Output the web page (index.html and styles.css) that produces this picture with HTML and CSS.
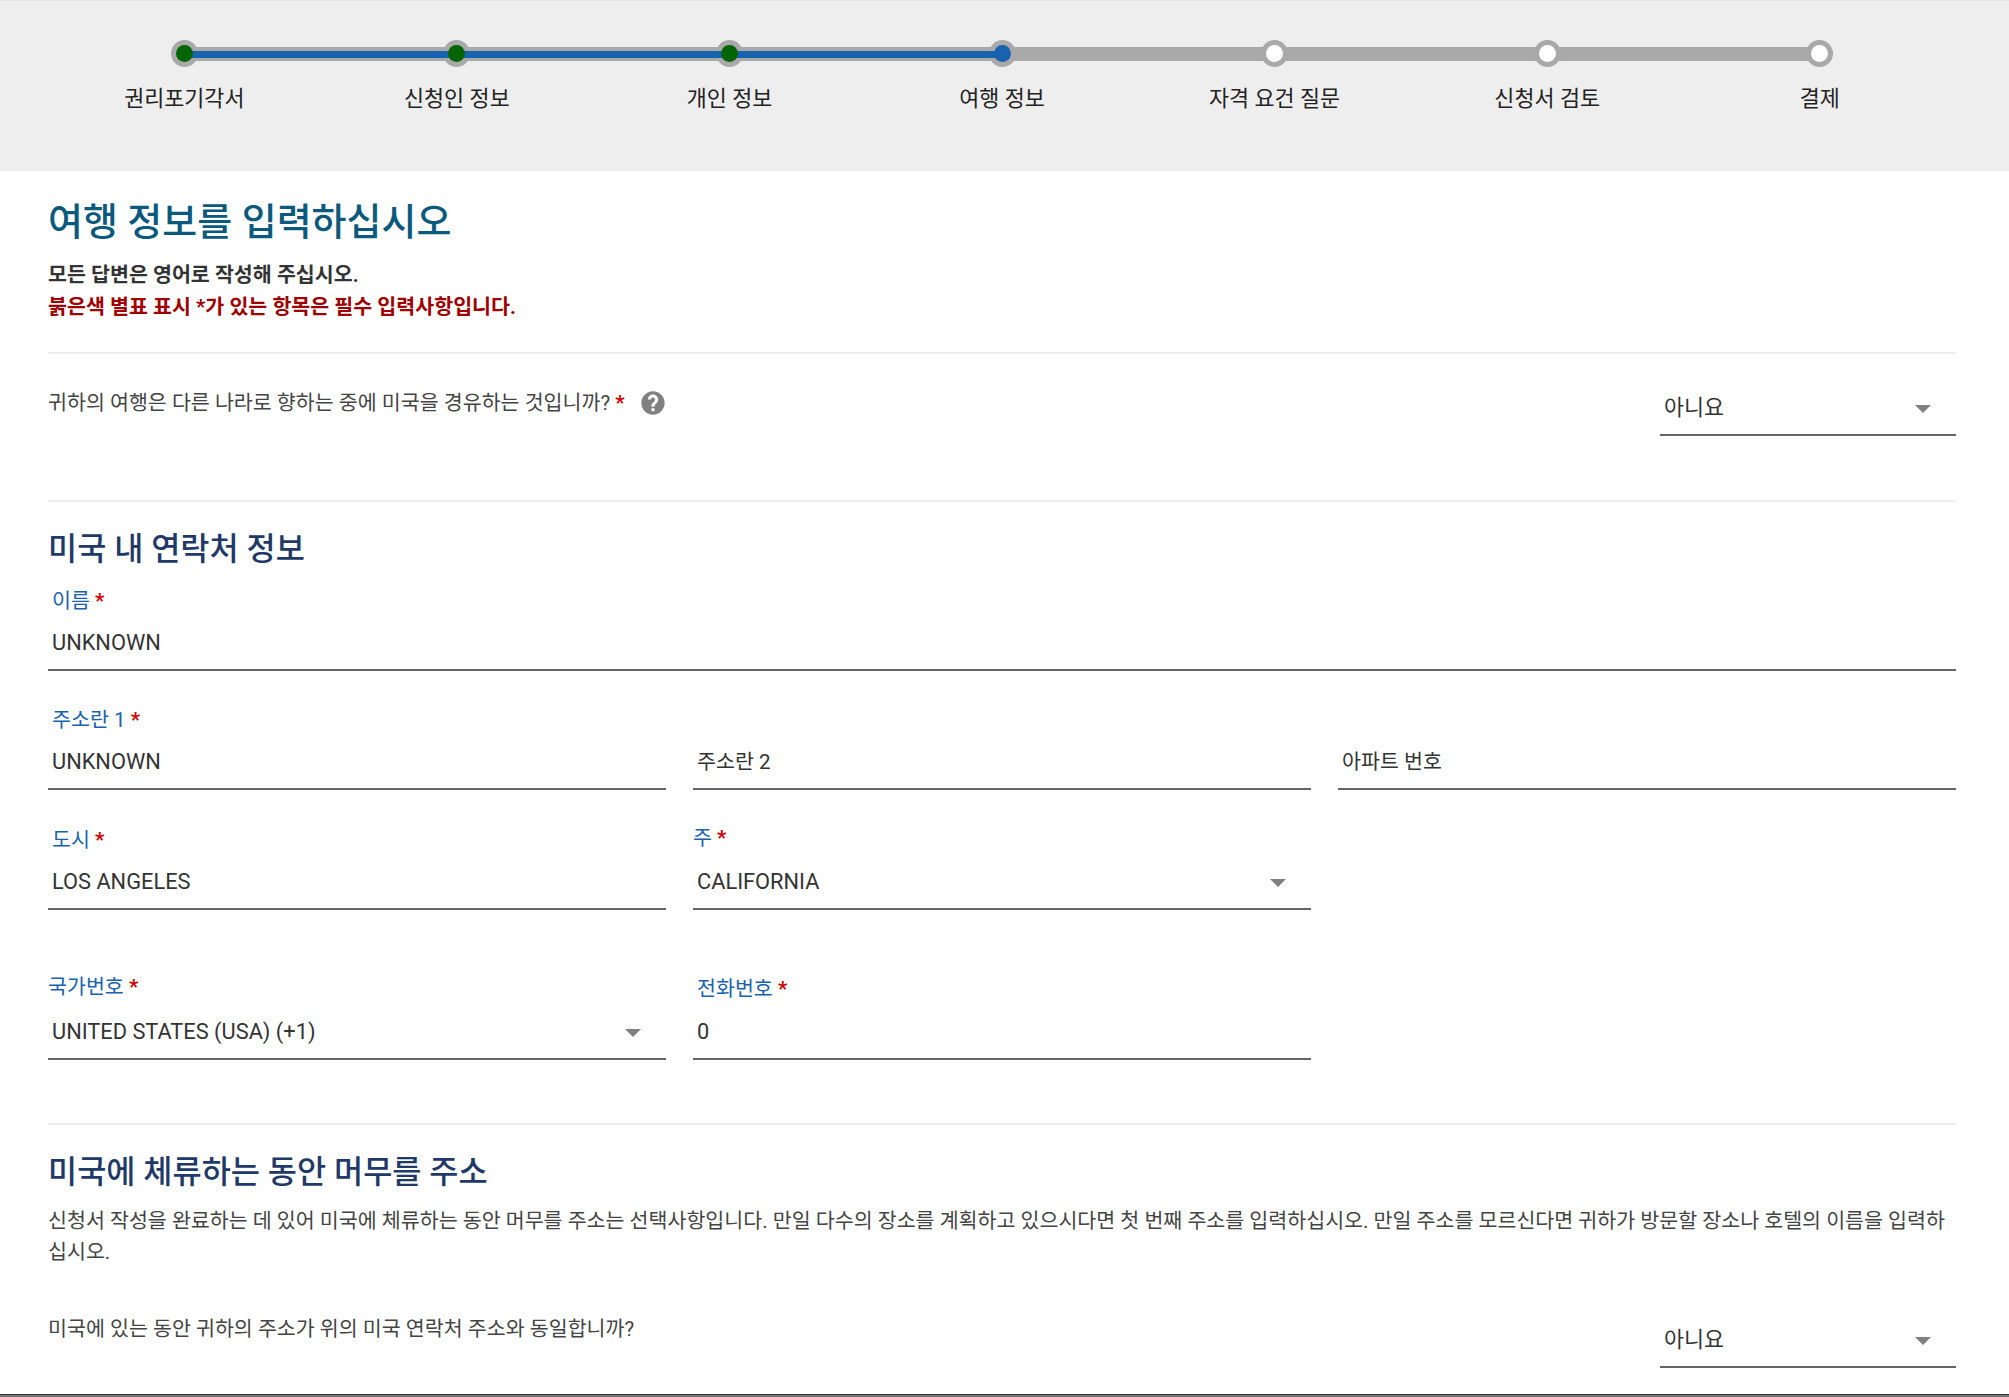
FILE: index.html
```html
<!DOCTYPE html>
<html lang="ko">
<head>
  <meta charset="UTF-8">
  <title>ESTA</title>
  <link rel="stylesheet" href="styles.css">
</head>
<body>
  <div class="stepper">
    <div class="step done"><div class="dot"></div><div class="step-label">권리포기각서</div></div>
    <div class="step done"><div class="dot"></div><div class="step-label">신청인 정보</div></div>
    <div class="step done"><div class="dot"></div><div class="step-label">개인 정보</div></div>
    <div class="step current"><div class="dot"></div><div class="step-label">여행 정보</div></div>
    <div class="step"><div class="dot"></div><div class="step-label">자격 요건 질문</div></div>
    <div class="step"><div class="dot"></div><div class="step-label">신청서 검토</div></div>
    <div class="step"><div class="dot"></div><div class="step-label">결제</div></div>
  </div>

  <div class="content">
    <h1>여행 정보를 입력하십시오</h1>
    <p class="note">모든 답변은 영어로 작성해 주십시오.</p>
    <p class="note red">붉은색 별표 표시 *가 있는 항목은 필수 입력사항입니다.</p>

    <div class="question q-transit">
      <div class="q-text">
        <span>귀하의 여행은 다른 나라로 향하는 중에 미국을 경유하는 것입니까? <span class="req">*</span></span>
        <svg class="help" viewBox="0 0 24 24"><path fill="#808080" d="M12 2C6.48 2 2 6.48 2 12s4.48 10 10 10 10-4.48 10-10S17.52 2 12 2zm1.300 17h-2.600v-2.500h2.600V19zm2.200-7.300l-1 1c-.8.8-1.200 1.300-1.200 2.500h-2.600v-.6c0-1.100.5-2.100 1.200-2.800l1.400-1.400c.3-.3.5-.8.5-1.300 0-1-.8-1.800-1.800-1.800s-1.800.8-1.800 1.800H7.600C7.600 6.600 9.600 4.700 12 4.700s4.400 1.900 4.400 4.300c0 1.100-.4 2-.9 2.700z"/></svg>
      </div>
      <div class="field select yes-no"><div class="value">아니요</div><div class="arrow"></div></div>
    </div>

    <h2 class="first">미국 내 연락처 정보</h2>

    <div class="field full">
      <div class="label">이름 <span class="req">*</span></div>
      <div class="value">UNKNOWN</div>
    </div>

    <div class="row">
      <div class="field">
        <div class="label">주소란 1 <span class="req">*</span></div>
        <div class="value">UNKNOWN</div>
      </div>
      <div class="field">
        <div class="value placeholder">주소란 2</div>
      </div>
      <div class="field">
        <div class="value placeholder">아파트 번호</div>
      </div>
    </div>

    <div class="row city">
      <div class="field">
        <div class="label">도시 <span class="req">*</span></div>
        <div class="value">LOS ANGELES</div>
      </div>
      <div class="field select">
        <div class="label flush">주 <span class="req">*</span></div>
        <div class="value">CALIFORNIA</div>
        <div class="arrow"></div>
      </div>
    </div>

    <div class="row phone">
      <div class="field select">
        <div class="label flush">국가번호 <span class="req">*</span></div>
        <div class="value">UNITED STATES (USA) (+1)</div>
        <div class="arrow"></div>
      </div>
      <div class="field">
        <div class="label">전화번호 <span class="req">*</span></div>
        <div class="value">0</div>
      </div>
    </div>

    <div class="section">
      <h2>미국에 체류하는 동안 머무를 주소</h2>
      <p class="body-text">신청서 작성을 완료하는 데 있어 미국에 체류하는 동안 머무를 주소는 선택사항입니다. 만일 다수의 장소를 계획하고 있으시다면 첫 번째 주소를 입력하십시오. 만일 주소를 모르신다면 귀하가 방문할 장소나 호텔의 이름을 입력하십시오.</p>

      <div class="question q-same">
        <div class="q-text">미국에 있는 동안 귀하의 주소가 위의 미국 연락처 주소와 동일합니까?</div>
        <div class="field select yes-no"><div class="value">아니요</div><div class="arrow"></div></div>
      </div>
    </div>
  </div>

  <div class="bottom-bar"></div>
</body>
</html>
```

FILE: styles.css
```css
* {
  box-sizing: border-box;
}

html, body {
  height: 1397px;
  overflow: hidden;
}

body {
  margin: 0;
  background: #fff;
  color: #333;
  font-family: Roboto, "Noto Sans CJK KR", sans-serif;
  font-size: 20.6px;
  position: relative;
}

/* progress steps */
.stepper {
  display: flex;
  height: 171px;
  padding: 39px 53px 0 48px;
  background: #eee;
  border-top: 1px solid #e6e6e6;
}

.step {
  flex: 1;
  position: relative;
  text-align: center;
}

.step::before,
.step.done::after {
  content: "";
  position: absolute;
  z-index: 1;
  top: 7px;
  left: 50%;
  width: 100%;
  height: 14px;
  background: #a9a9a9;
}

.step.done::after {
  z-index: 3;
  top: 10.5px;
  height: 7px;
  background: #1862ae;
}

.step:last-child::before {
  display: none;
}

.dot {
  position: relative;
  width: 27px;
  height: 27px;
  margin: 0 auto;
}

.dot::before,
.dot::after {
  content: "";
  position: absolute;
  border-radius: 50%;
}

.dot::before {
  z-index: 2;
  inset: 0;
  background: #a9a9a9;
}

.dot::after {
  z-index: 4;
  inset: 5px;
  background: #fff;
}

.done .dot::after {
  background: #006400;
}

.current .dot::after {
  background: #1862ae;
}

.step-label {
  margin-top: 17px;
  font-size: 21.8px;
  line-height: 30px;
  color: #222;
}

/* main form */
.content {
  padding: 0 53px 0 48px;
}

h1 {
  margin: 27px 0 0;
  font-size: 38px;
  line-height: 48px;
  font-weight: 500;
  color: #0b5a7d;
}

.note {
  margin: 0;
  line-height: 32px;
  font-weight: 700;
  color: #333;
}

.note:first-of-type {
  margin-top: 13px;
}

.note.red {
  color: #a00000;
}

.question {
  display: flex;
  justify-content: space-between;
  align-items: flex-start;
}

.q-transit {
  margin-top: 29px;
  height: 150px;
  padding-top: 33px;
  border-top: 2px solid #eee;
  border-bottom: 2px solid #eee;
}

.q-transit .yes-no {
  margin-top: -1px;
}

.q-same {
  margin-top: 45px;
}

.q-same .yes-no {
  margin-top: 5px;
}

.q-text {
  display: flex;
  align-items: center;
  line-height: 32px;
  color: #444;
}

.help {
  width: 28px;
  height: 28px;
  margin-left: 14px;
}

.req {
  color: #d40000;
  font-weight: 700;
}

h2 {
  margin: 0;
  font-size: 31.7px;
  line-height: 40px;
  font-weight: 500;
  color: #1f3a68;
}

h2.first {
  margin-top: 28px;
}

.field {
  position: relative;
  display: flex;
  flex-direction: column;
  justify-content: flex-end;
  height: 92px;
  border-bottom: 2px solid #666;
}

.field.full {
  height: 101px;
}

.row {
  display: grid;
  grid-template-columns: repeat(3, 1fr);
  gap: 27px;
  margin-top: 27px;
}

.row.city {
  margin-top: 28px;
}

.row.phone {
  margin-top: 58px;
}

.label {
  padding-left: 4px;
  line-height: 30px;
  color: #1862ae;
}

.label.flush {
  padding-left: 0;
  margin-bottom: 2px;
}

.phone .label {
  margin-bottom: 1px;
}

.phone .label.flush {
  margin-bottom: 3px;
}

.field .value {
  padding-left: 4px;
  margin-top: 12px;
  margin-bottom: 11px;
  font-size: 21.8px;
  line-height: 30px;
  color: #333;
}

.field .value.placeholder {
  font-size: 20.6px;
}

.yes-no {
  width: 296px;
  height: 50px;
}

.arrow {
  position: absolute;
  right: 25px;
  bottom: 21px;
  width: 0;
  height: 0;
  border-left: 8px solid transparent;
  border-right: 8px solid transparent;
  border-top: 8px solid #808080;
}

.section {
  margin-top: 63px;
  padding-top: 28px;
  border-top: 2px solid #eee;
}

.body-text {
  margin: 13px 0 0;
  line-height: 31px;
  color: #444;
}

.bottom-bar {
  position: absolute;
  left: 0;
  right: 0;
  bottom: 0;
  height: 3px;
  background: #777;
  border-top: 1px solid #333;
}
```
